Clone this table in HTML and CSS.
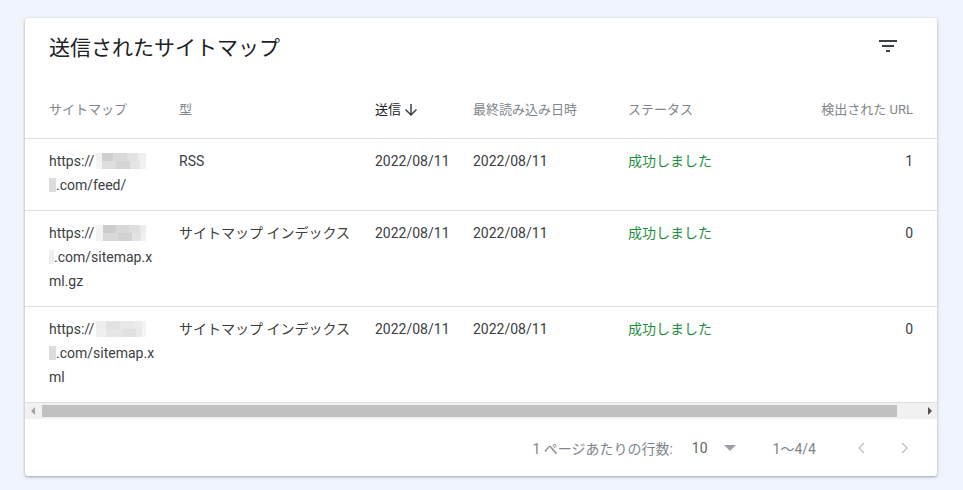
FILE: index.html
```html
<!DOCTYPE html>
<html lang="ja">
<head>
  <meta charset="UTF-8">
  <meta name="viewport" content="width=device-width, initial-scale=1.0">
  <title>送信されたサイトマップ</title>
  <link rel="stylesheet" href="styles.css">
</head>
<body>
  <div class="card">
    <div class="card-head">
      <h2 class="title">送信されたサイトマップ</h2>
      <span class="icon-btn">
        <svg viewBox="0 0 24 24" width="24" height="24"><path fill="#3c4043" d="M10 18h4v-2h-4v2zM3 6v2h18V6H3zm3 7h12v-2H6v2z"/></svg>
      </span>
    </div>

    <div class="table">
      <div class="row head">
        <div>サイトマップ</div>
        <div>型</div>
        <div class="sorted">送信
          <svg viewBox="0 0 24 24" width="18" height="18"><path fill="#3c4043" d="M20 12l-1.41-1.41L13 16.17V4h-2v12.17l-5.58-5.59L4 12l8 8 8-8z"/></svg>
        </div>
        <div>最終読み込み日時</div>
        <div>ステータス</div>
        <div class="num">検出された URL</div>
      </div>

      <div class="row">
        <div class="url">https://<span class="blur big"></span><br><span class="blur small"></span>.com/feed/</div>
        <div>RSS</div>
        <div>2022/08/11</div>
        <div>2022/08/11</div>
        <div class="ok">成功しました</div>
        <div class="num">1</div>
      </div>

      <div class="row">
        <div class="url">https://<span class="blur big b2"></span><br><span class="blur small s2"></span>.com/sitemap.x<br>ml.gz</div>
        <div>サイトマップ インデックス</div>
        <div>2022/08/11</div>
        <div>2022/08/11</div>
        <div class="ok">成功しました</div>
        <div class="num">0</div>
      </div>

      <div class="row">
        <div class="url">https://<span class="blur big b3"></span><br><span class="blur small"></span>.com/sitemap.x<br>ml</div>
        <div>サイトマップ インデックス</div>
        <div>2022/08/11</div>
        <div>2022/08/11</div>
        <div class="ok">成功しました</div>
        <div class="num">0</div>
      </div>
    </div>

    <div class="hscroll">
      <span class="arrow left"></span>
      <div class="track"><div class="thumb"></div></div>
      <span class="arrow right"></span>
    </div>

    <div class="pager">
      <span class="label">1 ページあたりの行数:</span>
      <span class="size">10</span>
      <span class="drop"></span>
      <span class="range">1〜4/4</span>
      <span class="nav">
        <svg viewBox="0 0 24 24" width="24" height="24"><path fill="none" stroke="#bdc1c6" stroke-width="1.4" d="M15 7l-5 5 5 5"/></svg>
      </span>
      <span class="nav">
        <svg viewBox="0 0 24 24" width="24" height="24"><path fill="none" stroke="#bdc1c6" stroke-width="1.4" d="M10 7l5 5-5 5"/></svg>
      </span>
    </div>
  </div>
</body>
</html>
```

FILE: styles.css
```css
body {
  background-color: #f0f4fc;
  margin: 0;
  padding: 18px 26px 14px 25px;
  font-family: Roboto, "Noto Sans CJK JP", sans-serif;
  color: #3c4043;
}

.card {
  background: #fff;
  border-radius: 3px;
  box-shadow: 0 1px 2px rgba(60, 64, 67, 0.3), 0 1px 3px 1px rgba(60, 64, 67, 0.12);
  overflow: hidden;
}

.card-head {
  display: flex;
  justify-content: space-between;
  align-items: flex-start;
  padding: 16px 37px 20px 24px;
}

.title {
  margin: 0;
  font-size: 21px;
  line-height: 28px;
  font-weight: 400;
  color: #202124;
}

.icon-btn {
  display: flex;
  width: 24px;
  height: 24px;
}

.row {
  display: grid;
  grid-template-columns: 106px 172px 74px 131px 1fr auto;
  column-gap: 24px;
  padding: 10px 24px 13px;
  border-bottom: 1px solid #e0e0e0;
  font-size: 14px;
  line-height: 24px;
}

.row.head {
  padding: 0 24px;
  height: 56px;
  align-items: center;
  font-size: 13px;
  color: #80868b;
}

.row.head .sorted {
  display: flex;
  align-items: center;
  color: #202124;
}

.sorted svg {
  margin-left: 1px;
}

.num {
  text-align: right;
}

.ok {
  color: #1e8e3e;
}

.blur {
  display: inline-block;
  vertical-align: -3px;
  height: 16px;
}

.blur.big {
  width: 50px;
  margin-left: 2px;
  background:
    linear-gradient(90deg, #f2f2f2 0 6px, #cfcfcf 6px 17px, #dadada 17px 31px, #e2e2e2 31px 42px, #efefef 42px) top / 100% 8px no-repeat,
    linear-gradient(90deg, #f4f4f4 0 6px, #dedede 6px 20px, #d4d4d4 20px 34px, #e4e4e4 34px 44px, #f2f2f2 44px) bottom / 100% 8px no-repeat;
}

.blur.b2 {
  background:
    linear-gradient(90deg, #f3f3f3 0 7px, #cccccc 7px 20px, #d8d8d8 20px 33px, #dedede 33px 44px, #ececec 44px) top / 100% 8px no-repeat,
    linear-gradient(90deg, #f3f3f3 0 7px, #d9d9d9 7px 22px, #d2d2d2 22px 36px, #e3e3e3 36px 45px, #f1f1f1 45px) bottom / 100% 8px no-repeat;
}

.blur.b3 {
  background:
    linear-gradient(90deg, #eeeeee 0 10px, #e2e2e2 10px 24px, #e8e8e8 24px 38px, #ececec 38px 46px, #f4f4f4 46px) top / 100% 8px no-repeat,
    linear-gradient(90deg, #f0f0f0 0 10px, #e6e6e6 10px 26px, #e1e1e1 26px 40px, #eaeaea 40px 46px, #f5f5f5 46px) bottom / 100% 8px no-repeat;
}

.blur.small {
  width: 7px;
  height: 14px;
  vertical-align: -2px;
  background: #dcdcdc;
}

.blur.s2 {
  width: 5px;
  background: #efefef;
}

.hscroll {
  display: flex;
  height: 16px;
  background: #f1f1f1;
}

.track {
  flex: 1;
  padding: 2px 25px 2px 2px;
}

.thumb {
  height: 12px;
  background: #c1c1c1;
}

.arrow {
  width: 15px;
  display: flex;
  align-items: center;
  justify-content: center;
}

.arrow::before {
  content: "";
  border-top: 4px solid transparent;
  border-bottom: 4px solid transparent;
}

.arrow.left::before {
  border-right: 4px solid #a3a3a3;
}

.arrow.right::before {
  border-left: 4px solid #505050;
}

.pager {
  display: flex;
  justify-content: flex-end;
  align-items: center;
  height: 57px;
  padding-right: 21px;
  font-size: 14px;
  color: #80868b;
}

.size {
  margin-left: 19px;
  color: #5f6368;
}

.drop {
  margin-left: 16px;
  border-left: 6px solid transparent;
  border-right: 6px solid transparent;
  border-top: 6px solid #9aa0a6;
}

.range {
  margin-left: 37px;
}

.nav {
  display: flex;
  margin-left: 19px;
}

.range + .nav {
  margin-left: 33px;
}
```
